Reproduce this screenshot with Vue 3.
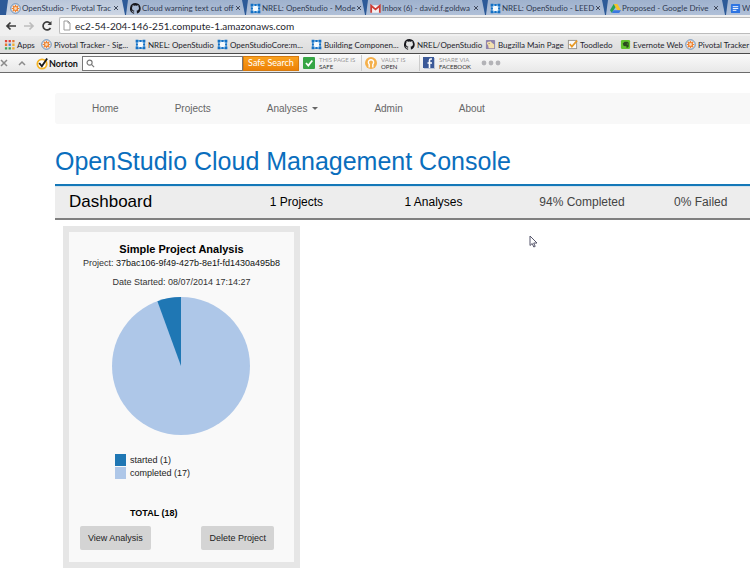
<script setup>
const tabs = [
  { icon: 'pivotal', title: 'OpenStudio - Pivotal Trac' },
  { icon: 'github', title: 'Cloud warning text cut off' },
  { icon: 'nrel', title: 'NREL: OpenStudio - Mode' },
  { icon: 'gmail', title: 'Inbox (6) - david.f.goldwa' },
  { icon: 'nrel', title: 'NREL: OpenStudio - LEED' },
  { icon: 'drive', title: 'Proposed - Google Drive' },
  { icon: 'doc', title: 'W' },
]

const bookmarks = [
  { icon: 'apps', title: 'Apps' },
  { icon: 'pivotal', title: 'Pivotal Tracker - Sig...' },
  { icon: 'nrel', title: 'NREL: OpenStudio' },
  { icon: 'nrel', title: 'OpenStudioCore:m...' },
  { icon: 'nrel', title: 'Building Componen...' },
  { icon: 'github', title: 'NREL/OpenStudio' },
  { icon: 'bugzilla', title: 'Bugzilla Main Page' },
  { icon: 'toodledo', title: 'Toodledo' },
  { icon: 'evernote', title: 'Evernote Web' },
  { icon: 'pivotal', title: 'Pivotal Tracker' },
]

const navItems = ['Home', 'Projects', 'Analyses', 'Admin', 'About']

const slices = [
  { label: 'started', count: 1, color: '#1f77b4' },
  { label: 'completed', count: 17, color: '#aec7e8' },
]
const total = slices.reduce((sum, s) => sum + s.count, 0)

const radius = 69
const startedAngle = (slices[0].count / total) * Math.PI * 2
const startedX = radius - radius * Math.sin(startedAngle)
const startedY = radius - radius * Math.cos(startedAngle)
const startedPath = `M${radius} ${radius}L${startedX} ${startedY}A${radius} ${radius} 0 0 1 ${radius} 0Z`
</script>

<template>
  <svg class="sprite" aria-hidden="true">
    <symbol id="pivotal" viewBox="0 0 12 12">
      <circle cx="6" cy="6" r="5.200" fill="#e9eef5" stroke="#5b86b5" stroke-width="1" />
      <path d="M6 1.800v8.400M1.800 6h8.400M3 3l6 6M9 3l-6 6" stroke="#ee8433" stroke-width="1.300" />
      <circle cx="6" cy="6" r="2.200" fill="#f6d9bd" stroke="#ee8433" stroke-width="1.300" />
    </symbol>
    <symbol id="github" viewBox="0 0 16 16">
      <path fill="#17171c" d="M8 0a8 8 0 0 0-2.500 15.600c.4.1.5-.2.5-.4v-1.500c-2.200.5-2.700-1-2.700-1-.4-.9-.9-1.200-.9-1.200-.7-.5.1-.5.1-.5.8.1 1.200.8 1.200.8.7 1.200 1.900.9 2.300.7.1-.5.3-.9.5-1.100-1.800-.2-3.600-.9-3.600-4 0-.9.3-1.600.8-2.100-.1-.2-.4-1 .1-2.100 0 0 .7-.2 2.200.8a7.500 7.500 0 0 1 4 0c1.500-1 2.200-.8 2.200-.8.4 1.100.2 1.900.1 2.100.5.6.8 1.300.8 2.100 0 3.100-1.900 3.700-3.700 3.900.3.3.6.8.6 1.500v2.200c0 .2.100.5.5.4A8 8 0 0 0 8 0z" />
    </symbol>
    <symbol id="nrel" viewBox="0 0 12 12">
      <rect x="2" y="2" width="8" height="8" fill="#f6fafd" stroke="#5aa5e2" stroke-width="1.200" />
      <path d="M.7.7h3v3h-3zM8.300.7h3v3h-3zM.7 8.300h3v3h-3zM8.300 8.300h3v3h-3z" fill="#1470c4" />
      <path d="M4.800 1h2.400v2.200H4.800zM4.800 8.800h2.400V11H4.800zM1 4.800h2.200v2.400H1zM8.800 4.800H11v2.400H8.800z" fill="#1470c4" />
    </symbol>
    <symbol id="gmail" viewBox="0 0 12 12">
      <path d="M1 2.500h10v8H1z" fill="#f4f0f2" />
      <path d="M1.300 10.500V3L6 7l4.700-4v7.500" fill="none" stroke="#cf3c35" stroke-width="1.900" />
    </symbol>
    <symbol id="drive" viewBox="0 0 12 12">
      <path d="M4 1h4l4 7H8z" fill="#f6c327" />
      <path d="M4 1l2 3.500L2 11 0 8z" fill="#23a05a" />
      <path d="M4 8h8l-2 3H2z" fill="#3b78e0" />
    </symbol>
    <symbol id="doc" viewBox="0 0 12 12">
      <rect x="1" y="1" width="10" height="10" rx="1" fill="#2e74e2" />
      <path d="M3 4h6M3 6h6M3 8h4" stroke="#fff" />
    </symbol>
    <symbol id="apps" viewBox="0 0 12 12">
      <path d="M1 1h2.500v2.500H1zM5 1h2.500v2.500H5z" fill="#e0463a" />
      <path d="M9 1h2.500v2.500H9zM1 5h2.500v2.500H1z" fill="#e5762f" />
      <path d="M5 5h2.500v2.500H5z" fill="#3a7fd5" />
      <path d="M9 5h2.500v2.500H9zM9 9h2.500v2.500H9z" fill="#f0ad2c" />
      <path d="M1 9h2.500v2.500H1zM5 9h2.500v2.500H5z" fill="#3ca554" />
    </symbol>
    <symbol id="bugzilla" viewBox="0 0 12 12">
      <rect x="1" y="1" width="10" height="10" rx="1" fill="#8f83ad" />
      <path d="M2 5Q2 2.500 4.500 3l1.500-.5L7.500 4 10 6v4H4L3.500 7z" fill="#f3dfae" />
      <path d="M4 5h1" stroke="#7a5a3a" />
    </symbol>
    <symbol id="toodledo" viewBox="0 0 12 12">
      <rect x="1.500" y="1.500" width="9" height="9" fill="#fafafa" stroke="#96918b" />
      <path d="M3 5.500l2.300 2.800L11 1.800" fill="none" stroke="#e89a25" stroke-width="1.800" />
    </symbol>
    <symbol id="evernote" viewBox="0 0 12 12">
      <rect x="1" y="1" width="10" height="10" rx="1.500" fill="#62c32f" />
      <path d="M3 5l2-2h3l1.500 1v4.500L8 9.500H7V8L4 7.500z" fill="#2c4a20" />
      <path d="M7.500 5.500h1" stroke="#62c32f" />
    </symbol>
  </svg>

  <header class="browser">
    <div class="tabs">
      <div v-for="(tab, i) in tabs" :key="i" class="tab" :class="{ current: i === 0 }">
        <svg class="icon"><use :href="'#' + tab.icon" /></svg>
        <span class="tab-title">{{ tab.title }}</span>
        <button class="tab-close" aria-label="Close tab">
          <svg viewBox="0 0 6 6"><path d="M1 1l4 4M5 1L1 5" /></svg>
        </button>
      </div>
    </div>

    <div class="toolbar">
      <button class="tool" aria-label="Back">
        <svg viewBox="0 0 12 12"><path d="M11 6H2M5.500 2.500L2 6l3.500 3.500" stroke="#3c3c3c" /></svg>
      </button>
      <button class="tool" aria-label="Forward">
        <svg viewBox="0 0 12 12"><path d="M1 6h9M6.500 2.500L10 6 6.500 9.500" stroke="#bdbdbd" /></svg>
      </button>
      <button class="tool" aria-label="Reload">
        <svg viewBox="0 0 12 12">
          <path d="M9.500 8A4 4 0 1 1 9 3.200" stroke="#3c3c3c" />
          <path d="M10.500 1v4h-4z" fill="#3c3c3c" stroke="none" />
        </svg>
      </button>
      <label class="address">
        <svg class="page" viewBox="0 0 8 11"><path d="M1 1h4l2 2v7H1zM5 1v2h2" /></svg>
        <input type="text" aria-label="Address" value="ec2-54-204-146-251.compute-1.amazonaws.com" />
      </label>
    </div>

    <nav class="bookmarks" aria-label="Bookmarks">
      <a v-for="(mark, i) in bookmarks" :key="i" href="#">
        <svg class="icon"><use :href="'#' + mark.icon" /></svg>
        <span>{{ mark.title }}</span>
      </a>
    </nav>

    <div class="norton">
      <button class="tiny" aria-label="Close toolbar">
        <svg viewBox="0 0 8 8"><path d="M1 1l6 6M7 1L1 7" /></svg>
      </button>
      <button class="tiny" aria-label="Collapse toolbar">
        <svg viewBox="0 0 8 8"><path d="M1 6l3-3 3 3" /></svg>
      </button>
      <div class="norton-brand">
        <svg viewBox="0 0 14 14">
          <circle cx="6.500" cy="7.500" r="5" fill="#fff" stroke="#f5b324" stroke-width="2" />
          <path d="M3.500 6.500L6.300 10 12 1.500" fill="none" stroke="#1b1b1b" stroke-width="2" />
        </svg>
        <span>Norton</span>
      </div>
      <label class="norton-search">
        <svg viewBox="0 0 10 10"><circle cx="4" cy="4" r="2.800" /><path d="M6 6l3 3" /></svg>
        <input type="text" aria-label="Norton search" />
      </label>
      <button class="safe-search">Safe Search</button>
      <div class="badge">
        <svg viewBox="0 0 12 12">
          <rect width="12" height="12" rx="1" fill="#36a544" />
          <path d="M3 6l2.300 2.500L9.300 3.500" fill="none" stroke="#fff" stroke-width="1.800" />
        </svg>
        <p>THIS PAGE IS<b>SAFE</b></p>
      </div>
      <div class="badge">
        <svg viewBox="0 0 12 12">
          <circle cx="6" cy="6" r="6" fill="#f4b04c" />
          <path d="M4.200 10.500V7.300A2.600 2.600 0 1 1 7.800 7.300v3.200" fill="none" stroke="#fff" stroke-width="1.400" />
        </svg>
        <p>VAULT IS<b>OPEN</b></p>
      </div>
      <div class="badge">
        <svg viewBox="0 0 12 12">
          <rect x="1" y="1" width="11" height="11" fill="#bcc5d7" />
          <rect width="11" height="11" fill="#3b5998" />
          <path d="M9 2H7.800Q6.500 2 6.500 3.500V11M4.500 6H9" fill="none" stroke="#fff" stroke-width="1.600" />
        </svg>
        <p>SHARE VIA<b>FACEBOOK</b></p>
      </div>
      <button class="more" aria-label="More">
        <svg viewBox="0 0 20 6">
          <circle cx="3" cy="3" r="2.400" /><circle cx="10" cy="3" r="2.400" /><circle cx="17" cy="3" r="2.400" />
        </svg>
      </button>
    </div>
  </header>

  <main class="page-body">
    <nav class="site-nav" aria-label="Main">
      <a v-for="item in navItems" :key="item" href="#">
        {{ item }}<span v-if="item === 'Analyses'" class="caret"></span>
      </a>
    </nav>

    <h1>OpenStudio Cloud Management Console</h1>

    <section class="summary">
      <h2>Dashboard</h2>
      <a href="#">1 Projects</a>
      <a href="#">1 Analyses</a>
      <span>94% Completed</span>
      <span>0% Failed</span>
    </section>

    <article class="card">
      <h3>Simple Project Analysis</h3>
      <p>Project: <a href="#">37bac106-9f49-427b-8e1f-fd1430a495b8</a></p>
      <p class="date">Date Started: 08/07/2014 17:14:27</p>
      <svg class="pie" viewBox="0 0 138 138" role="img" aria-label="Analysis status">
        <circle :cx="radius" :cy="radius" :r="radius" :fill="slices[1].color" />
        <path :d="startedPath" :fill="slices[0].color" />
      </svg>
      <ul class="legend">
        <li v-for="slice in slices" :key="slice.label">
          <i :style="{ background: slice.color }"></i>{{ slice.label }} ({{ slice.count }})
        </li>
      </ul>
      <p class="total">TOTAL ({{ total }})</p>
      <div class="actions">
        <button>View Analysis</button>
        <button>Delete Project</button>
      </div>
    </article>
  </main>

  <svg class="pointer" viewBox="0 0 9 13" aria-hidden="true">
    <path d="M1 1v9.500l2.200-2 1.600 3.500 1.400-.6-1.500-3.400H8z" fill="#fff" stroke="#55556a" />
  </svg>
</template>

<style>
body {
  margin: 0;
  background: #fff;
  overflow: hidden;
}
</style>

<style scoped>
* {
  box-sizing: border-box;
}
h1, h2, h3, p, ul {
  margin: 0;
  padding: 0;
  font-weight: normal;
}
a {
  color: inherit;
  text-decoration: none;
}
button, input {
  font: inherit;
  color: inherit;
  border: 0;
  padding: 0;
  background: none;
}
input {
  flex: 1;
  min-width: 0;
  outline: 0;
}
.sprite {
  position: absolute;
  width: 0;
  height: 0;
}
.browser {
  font-family: Lato, "Open Sans", sans-serif;
  font-size: 8px;
  color: #1e1e2c;
  white-space: nowrap;
  overflow: hidden;
}
.icon {
  flex: none;
  width: 11px;
  height: 11px;
}

.tabs {
  display: flex;
  height: 15px;
  padding-left: 5px;
  background: #2d5a98;
  overflow: hidden;
}
.tab {
  flex: none;
  display: flex;
  align-items: center;
  gap: 1px;
  width: 120px;
  padding: 1px 6px 0 5px;
  color: #2f3a52;
  background: linear-gradient(#9fb2ce, #b0c0d8);
  clip-path: polygon(3px 0, 117px 0, 120px 100%, 1px 100%);
}
.tab.current {
  background: linear-gradient(#b9c6da, #cdd6e4);
}
.tab-title {
  flex: 1;
}
.tab-close {
  display: flex;
  width: 6px;
}
.tab-close svg {
  width: 6px;
  height: 6px;
  stroke: #424b5e;
}

.toolbar {
  display: flex;
  align-items: center;
  gap: 6px;
  height: 21px;
  padding: 1px 0 1px 5px;
  background: #f0f0f0;
}
.tool {
  display: flex;
}
.tool svg {
  width: 12px;
  height: 12px;
  fill: none;
  stroke-width: 1.7;
}
.address {
  flex: 1;
  display: flex;
  align-items: center;
  gap: 4px;
  height: 17px;
  padding-left: 3px;
  background: #fff;
  border: 1px solid #bcbcbc;
  border-right: 0;
  border-radius: 2px 0 0 2px;
  font-size: 10px;
}
.page {
  width: 8px;
  height: 11px;
  fill: #fff;
  stroke: #9b9b9b;
}

.bookmarks {
  display: grid;
  grid-template-columns: 37px 94px 82px 94px 93px 81px 82px 53px 65px 65px;
  align-items: center;
  height: 17px;
  padding-left: 4px;
  background: linear-gradient(#e9e9e9, #dcdcdc);
}
.bookmarks a {
  display: flex;
  align-items: center;
  gap: 2px;
}

.norton {
  display: flex;
  align-items: center;
  height: 20px;
  background: linear-gradient(#fafafa, #e8e8e8);
  border-top: 1px solid #4a4a4a;
  border-bottom: 1px solid #6b6b6b;
}
.tiny {
  display: flex;
  width: 18px;
}
.tiny svg {
  width: 8px;
  height: 8px;
  fill: none;
  stroke: #8b8b8b;
  stroke-width: 1.5;
}
.norton-brand {
  display: flex;
  align-items: center;
  width: 46px;
  font-size: 9px;
  font-weight: bold;
  color: #111;
}
.norton-brand svg {
  flex: none;
  width: 13px;
  height: 13px;
}
.norton-search {
  display: flex;
  align-items: center;
  width: 161px;
  height: 15px;
  padding-left: 3px;
  background: #fff;
  border: 1px solid #777;
}
.norton-search svg {
  width: 9px;
  height: 9px;
  fill: none;
  stroke: #777;
  stroke-width: 1.3;
}
.safe-search {
  width: 56px;
  height: 15px;
  margin-right: 4px;
  background: linear-gradient(#f9a11f, #ed8206);
  border: 1px solid #d57a10;
  color: #fff;
  font-size: 9px;
  line-height: 12px;
}
.badge {
  display: flex;
  align-items: center;
  gap: 4px;
  width: 58px;
  height: 16px;
  color: #999;
}
.badge + .badge {
  padding-left: 3px;
  border-left: 1px solid #ccc;
}
.badge svg {
  flex: none;
  width: 12px;
  height: 12px;
}
.badge p {
  font-size: 6px;
  line-height: 7px;
}
.badge b {
  display: block;
  font-weight: normal;
  color: #333;
}
.more {
  display: flex;
  margin-left: 4px;
}
.more svg {
  width: 20px;
  height: 6px;
  fill: #b3b3b7;
}

.page-body {
  padding: 20px 0 12px 55px;
  font: 9px/12px "Liberation Sans", Arial, sans-serif;
  color: #333;
  white-space: nowrap;
}
.site-nav {
  display: flex;
  gap: 56px;
  padding: 0 37px;
  background: #f8f8f8;
  border-radius: 3px 0 0 3px;
  font-size: 10px;
  line-height: 31px;
  color: #666;
}
.caret {
  display: inline-block;
  margin-left: 5px;
  border: 3px solid transparent;
  border-top-color: #666;
  border-bottom: 0;
  vertical-align: 2px;
}
h1 {
  padding: 22px 0 8px;
  font-size: 25px;
  line-height: 30px;
  color: #0a6ebd;
}
.summary {
  display: grid;
  grid-template-columns: 201fr repeat(3, 135fr) 76fr;
  align-items: center;
  height: 36px;
  padding-left: 14px;
  background: #ededed;
  border-top: 2px solid #1478b8;
  border-bottom: 2px solid #808080;
  box-shadow: inset 0 1px #d3e2ec;
  font-size: 12px;
  color: #444;
}
.summary h2 {
  font-size: 17px;
  line-height: 20px;
  color: #000;
}
.summary a {
  color: #000;
}
.card {
  width: 237px;
  margin: 6px 0 0 8px;
  padding: 10px 20px 12px 11px;
  background: #f9f9f9;
  border: 6px solid #e6e6e6;
  text-align: center;
}
.card h3, .card > p, .pie {
  margin-right: -9px;
}
.card h3 {
  font-size: 11px;
  font-weight: bold;
  line-height: 15px;
  color: #000;
}
.card p a {
  color: #111;
}
.card .date {
  margin-top: 7px;
}
.pie {
  display: block;
  width: 138px;
  height: 138px;
  margin: 9px auto 0 32px;
}
.legend {
  display: grid;
  gap: 1px;
  margin: 19px 0 0 35px;
  list-style: none;
  color: #222;
}
.legend li {
  display: flex;
  gap: 4px;
}
.legend i {
  width: 11px;
  height: 12px;
}
.card .total {
  margin: 28px 0 7px 50px;
  font-weight: bold;
  color: #000;
  text-align: left;
}
.actions {
  display: flex;
  justify-content: space-between;
}
.actions button {
  padding: 0 8px;
  background: #d4d4d4;
  border-radius: 2px;
  line-height: 24px;
  color: #222;
}
.pointer {
  position: absolute;
  left: 529px;
  top: 235px;
  width: 9px;
  height: 13px;
}
</style>
